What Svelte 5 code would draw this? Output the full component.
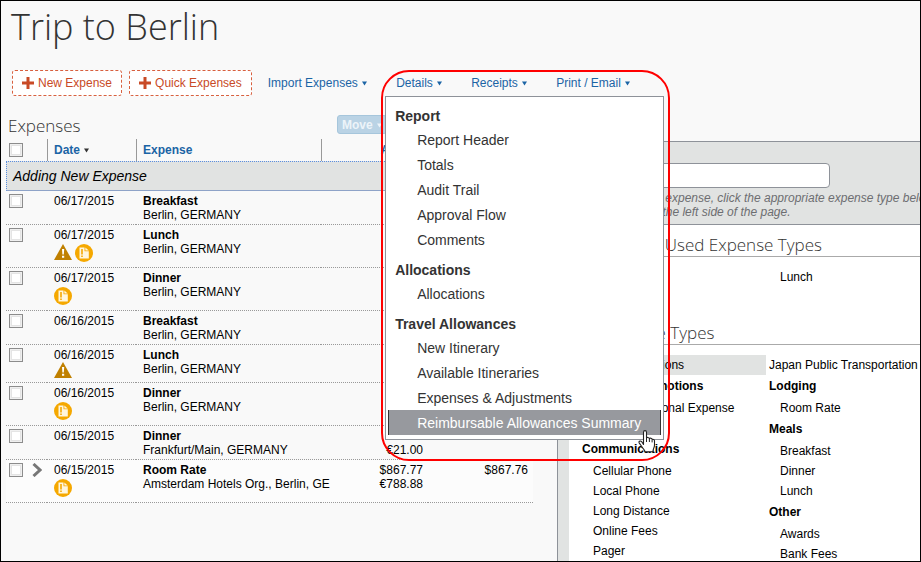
<script>
  const rows = [
    { date: '06/17/2015', name: 'Breakfast', place: 'Berlin, GERMANY', icons: [] },
    { date: '06/17/2015', name: 'Lunch', place: 'Berlin, GERMANY', icons: ['warn', 'note'] },
    { date: '06/17/2015', name: 'Dinner', place: 'Berlin, GERMANY', icons: ['note'] },
    { date: '06/16/2015', name: 'Breakfast', place: 'Berlin, GERMANY', icons: [] },
    { date: '06/16/2015', name: 'Lunch', place: 'Berlin, GERMANY', icons: ['warn'] },
    { date: '06/16/2015', name: 'Dinner', place: 'Berlin, GERMANY', icons: ['note'] },
    { date: '06/15/2015', name: 'Dinner', place: 'Frankfurt/Main, GERMANY', amount: ['', '€21.00'], icons: [] },
    { date: '06/15/2015', name: 'Room Rate', place: 'Amsterdam Hotels Org., Berlin, GE', amount: ['$867.77', '€788.88'], req: '$867.76', icons: ['note'], expandable: true }
  ];

  const menu = [
    { title: 'Report', items: ['Report Header', 'Totals', 'Audit Trail', 'Approval Flow', 'Comments'] },
    { title: 'Allocations', items: ['Allocations'] },
    { title: 'Travel Allowances', items: ['New Itinerary', 'Available Itineraries', 'Expenses & Adjustments', 'Reimbursable Allowances Summary'] }
  ];
  const active = 'Reimbursable Allowances Summary';

  const types = [
    [
      { label: 'Cash Contributions', top: true, selected: true },
      { label: 'Events & Promotions', head: true },
      { label: 'New Promotional Expense' },
      { label: '' },
      { label: 'Communications', head: true },
      { label: 'Cellular Phone' },
      { label: 'Local Phone' },
      { label: 'Long Distance' },
      { label: 'Online Fees' },
      { label: 'Pager' }
    ],
    [
      { label: 'Japan Public Transportation', top: true },
      { label: 'Lodging', head: true },
      { label: 'Room Rate' },
      { label: 'Meals', head: true },
      { label: 'Breakfast' },
      { label: 'Dinner' },
      { label: 'Lunch' },
      { label: 'Other', head: true },
      { label: 'Awards' },
      { label: 'Bank Fees' }
    ]
  ];
</script>

{#snippet plus()}
  <svg class="plus" viewBox="0 0 12 12" aria-hidden="true"><path d="M4.500 0h3v4.500H12v3H7.500V12h-3V7.500H0v-3h4.500z" fill="#c84a26" /></svg>
{/snippet}

{#snippet caret()}
  <svg class="caret" viewBox="0 0 6 5" aria-hidden="true"><path d="M0 0h6L3 5z" fill="currentColor" /></svg>
{/snippet}

<div class="page">
  <h1>Trip to Berlin</h1>

  <nav class="toolbar">
    <button class="add" type="button">{@render plus()}New Expense</button>
    <button class="add" type="button">{@render plus()}Quick Expenses</button>
    <button class="link import" type="button">Import Expenses {@render caret()}</button>
    <div class="details">
      <button class="link" type="button" aria-expanded="true">Details {@render caret()}</button>
      <div class="menu">
        {#each menu as group}
          <section>
            <h3>{group.title}</h3>
            {#each group.items as item}
              <button type="button" class:active={item === active}>{item}</button>
            {/each}
          </section>
        {/each}
      </div>
      <div class="callout"></div>
      <svg class="pointer" viewBox="0 0 18 24" aria-hidden="true">
        <path
          d="M5.500 14.500V2.500C5.500 1.200 6.200.6 7 .6s1.500.6 1.500 1.900V8c.3-.8 2.500-.9 2.900.6.7-.8 2.500-.6 2.700.9.9-.6 2.400-.1 2.400 1.300v4.200c0 2.500-1.500 4-1.500 6v.8H6.800V21c-.8-1.600-3-4-4.300-6.200-.8-1.200-1.800-2-1.500-3 .4-1.100 1.900-1 2.800 0z"
          fill="#fff" stroke="#222" stroke-width="1.100" stroke-linejoin="round" />
        <path d="M8.500 8v4M11.400 8.800v3.200M14.100 9.800v2.600" stroke="#222" fill="none" />
      </svg>
    </div>
    <button class="link" type="button">Receipts {@render caret()}</button>
    <button class="link" type="button">Print / Email {@render caret()}</button>
  </nav>

  <main>
    <div class="left">
      <div class="listbar">
        <h2>Expenses</h2>
        <button class="move" type="button" disabled>Move {@render caret()}</button>
      </div>
      <table>
        <colgroup><col class="c1" /><col class="c2" /><col class="c3" /><col class="c4" /><col class="c5" /></colgroup>
        <thead>
          <tr>
            <th><input type="checkbox" aria-label="Select all expenses" /></th>
            <th class="rule">Date<span class="dark">{@render caret()}</span></th>
            <th class="rule">Expense</th>
            <th class="rule num">Amount</th>
            <th></th>
          </tr>
        </thead>
        <tbody>
          <tr class="adding"><td colspan="5">Adding New Expense</td></tr>
          {#each rows as r, i}
            <tr class:current={r.expandable}>
              <td>
                <div class="pick">
                  <input type="checkbox" aria-label="Select expense {i + 1}" />
                  {#if r.expandable}
                    <svg class="chev" viewBox="0 0 10 14" aria-hidden="true"><path d="M1.500 1l6.500 6-6.500 6" fill="none" stroke="#777" stroke-width="3" /></svg>
                  {/if}
                </div>
              </td>
              <td>
                {r.date}
                {#if r.icons.length}
                  <div class="icons" class:low={!r.icons.includes('note')}>
                    {#each r.icons as icon}
                      {#if icon === 'warn'}
                        <svg class="warn" viewBox="0 0 18 16"><path d="M9 0l9 16H0z" fill="#c08000" /><path d="M8 5h2.200l-.4 5.500H8.400zM8 11.800h2.200v2H8z" fill="#fff" /></svg>
                      {:else}
                        <svg class="note" viewBox="0 0 18 18">
                          <circle cx="9" cy="9" r="9" fill="#f5a800" />
                          <path d="M4.500 3.500H9.500V7.300H13.800V14.500H4.500z" fill="#fff6de" />
                          <path d="M10.400 3.500l3.400 3h-3.400z" fill="#fff6de" />
                          <path d="M6.200 5h1.600v5.500H6.200zM6.200 11.500h1.600V13H6.200z" fill="#f5a800" />
                        </svg>
                      {/if}
                    {/each}
                  </div>
                {/if}
              </td>
              <td class="where"><strong>{r.name}</strong><br />{r.place}</td>
              <td class="num">
                {#if r.amount}{r.amount[0]}<br />{r.amount[1]}{/if}
              </td>
              <td class="num">{r.req ?? ''}</td>
            </tr>
          {/each}
        </tbody>
      </table>
    </div>

    <aside>
      <div class="finder">
        <input type="text" aria-label="Expense type" />
        <p>To create a new expense, click the appropriate expense type below<br />or expenses on the left side of the page.</p>
      </div>
      <div class="types">
        <h2>Frequently Used Expense Types</h2>
        <div class="cols recent">
          <div></div>
          <div><a href="#lunch">Lunch</a></div>
        </div>
        <h2>All Expense Types</h2>
        <div class="cols">
          {#each types as col}
            <div>
              {#each col as t}
                {#if t.head}
                  <h4>{t.label}</h4>
                {:else if t.label}
                  <a href="#type" class:top={t.top} class:selected={t.selected}>{t.label}</a>
                {:else}
                  <div class="blank"></div>
                {/if}
              {/each}
            </div>
          {/each}
        </div>
      </div>
    </aside>
  </main>
</div>

<style>
  :global(body) {
    margin: 0;
  }
  .page {
    box-sizing: border-box;
    height: 100vh;
    overflow: hidden;
    display: flex;
    flex-direction: column;
    border: 1px solid #000;
    background: #f9f9f9;
    color: #000;
    font: 12px/14px 'Liberation Sans', Arial, sans-serif;
  }
  h1,
  h2,
  h3,
  h4,
  p {
    margin: 0;
  }
  button {
    font: inherit;
    cursor: pointer;
  }
  h1 {
    padding: 0 10px;
    font: 300 36px/52px 'Open Sans', sans-serif;
    color: #333;
  }
  h2 {
    font: 300 17px/22px 'Open Sans', sans-serif;
    color: #333;
    white-space: nowrap;
  }
  .toolbar {
    display: flex;
    align-items: center;
    padding: 17px 11px 0;
    white-space: nowrap;
  }
  .add {
    height: 26px;
    margin-right: 7px;
    padding: 0 9px;
    display: flex;
    align-items: center;
    gap: 4px;
    border: 1px dashed #d8603f;
    border-radius: 3px;
    background: #fff;
    color: #c84a26;
  }
  .plus {
    width: 12px;
    height: 12px;
  }
  .caret {
    width: 5px;
    height: 5px;
    margin-left: 1px;
    vertical-align: 1px;
  }
  .link {
    padding: 0;
    margin-right: 29px;
    border: 0;
    background: none;
    color: #1b64a5;
  }
  .import {
    margin-left: 9px;
  }
  .details {
    position: relative;
  }
  .menu {
    position: absolute;
    z-index: 2;
    top: 20px;
    left: -11px;
    box-sizing: border-box;
    width: 279px;
    padding: 9px 2px 4px;
    border: 1px solid #8e9299;
    background: #fff;
    color: #333;
    font-size: 14px;
  }
  .menu section {
    margin-bottom: 8px;
  }
  .menu section:last-child {
    margin-bottom: 0;
  }
  .menu h3 {
    padding-left: 7px;
    font-size: 14px;
    line-height: 21px;
  }
  .menu button {
    display: block;
    width: 100%;
    height: 25px;
    padding: 0 0 0 29px;
    border: 0;
    background: none;
    color: #333;
    text-align: left;
  }
  .menu button.active {
    background: #97999e;
    color: #fff;
    box-shadow: inset 1px 0 #333, inset -1px 0 #333;
  }
  .callout {
    position: absolute;
    z-index: 3;
    top: -6px;
    left: -15px;
    box-sizing: border-box;
    width: 289px;
    height: 391px;
    border: 2px solid #f00;
    border-radius: 28px;
    pointer-events: none;
  }
  .pointer {
    position: absolute;
    z-index: 4;
    top: 354px;
    left: 242px;
    width: 18px;
    height: 24px;
  }
  main {
    flex: 1;
    min-height: 0;
    display: grid;
    grid-template-columns: minmax(0, 556fr) minmax(0, 363fr);
  }
  .left {
    padding: 19px 24px 0 5px;
  }
  .listbar {
    display: flex;
    justify-content: space-between;
    height: 24px;
    padding: 0 146px 0 2px;
  }
  .move {
    height: 19px;
    padding: 0 4px;
    border: 1px solid #a6c6dc;
    border-radius: 3px;
    background: #bad3e5;
    color: #edf4f9;
    font-weight: bold;
  }
  table {
    width: 100%;
    table-layout: fixed;
    border-collapse: separate;
    border-spacing: 0;
  }
  .c1 {
    width: 41px;
  }
  .c2 {
    width: 89px;
  }
  .c3 {
    width: 185px;
  }
  .c5 {
    width: 105px;
  }
  th {
    height: 22px;
    padding: 0 6px;
    text-align: left;
    color: #1b64a5;
  }
  th.rule {
    border-left: 1px solid #999;
  }
  td {
    padding: 3px 5px 2px 7px;
    vertical-align: top;
    border-bottom: 1px dotted #999;
  }
  th:first-child,
  td:first-child {
    padding-left: 3px;
  }
  th.num {
    padding-right: 2px;
  }
  tbody tr {
    height: 34px;
  }
  .num {
    text-align: right;
  }
  .dark {
    margin-left: 3px;
    color: #333;
  }
  tr.adding {
    height: 30px;
  }
  tr.adding td {
    padding: 0 6px;
    vertical-align: middle;
    border: 1px dotted #5b8fe0;
    border-bottom: 1px solid #8ea3c8;
    background: #e1e3e2;
    font-size: 14px;
    font-style: italic;
  }
  .current td {
    background: #fcfcfc;
  }
  td.where {
    padding-right: 0;
    white-space: nowrap;
  }
  input[type='checkbox'] {
    appearance: none;
    display: block;
    box-sizing: border-box;
    width: 14px;
    height: 14px;
    margin: 0;
    border: 1px solid #8c8c8c;
    background: #fff;
    box-shadow: inset 0 0 0 1px #f0f0f0, inset 0 0 0 2px #e4e4e4;
  }
  .pick {
    display: flex;
    gap: 9px;
  }
  .chev {
    width: 10px;
    height: 14px;
  }
  .icons {
    display: flex;
    gap: 3px;
    height: 23px;
    padding-top: 2px;
    box-sizing: border-box;
  }
  .icons.low {
    height: 18px;
    padding-top: 0;
  }
  .warn {
    width: 18px;
    height: 16px;
  }
  .note {
    width: 18px;
    height: 18px;
  }
  aside {
    margin-top: 45px;
    display: flex;
    flex-direction: column;
    min-height: 0;
    overflow: hidden;
    border-top: 1px solid #8e9299;
    border-left: 1px solid #8e9299;
    background: #fff;
  }
  .finder {
    height: 83px;
    padding: 21px 0 0 19px;
    box-sizing: border-box;
    flex: none;
    background: #e1e3e2;
    border-bottom: 1px solid #8e9299;
    color: #6d6e71;
    font-style: italic;
  }
  .finder input {
    display: block;
    box-sizing: border-box;
    width: 253px;
    height: 25px;
    margin-bottom: 3px;
    border: 1px solid #8e9299;
    border-radius: 4px;
    background: #fff;
  }
  .finder p {
    white-space: nowrap;
  }
  .types {
    flex: 1;
    padding-top: 9px;
    border-left: 11px solid #e1e3e2;
  }
  .types h2 {
    padding-left: 10px;
    border-bottom: 1px solid #aaa;
  }
  .cols {
    display: grid;
    grid-template-columns: 197px minmax(0, 1fr);
    padding-top: 10px;
  }
  .recent {
    height: 55px;
  }
  .cols a {
    display: block;
    padding-left: 24px;
    line-height: 20px;
    color: #000;
    text-decoration: none;
    white-space: nowrap;
  }
  .blank {
    height: 20px;
  }
  .cols > div + div a {
    padding-left: 14px;
  }
  .cols a.top {
    padding-left: 13px;
  }
  .cols > div + div a.top,
  .cols > div + div h4 {
    padding-left: 3px;
  }
  .cols a.selected {
    background: #e1e3e2;
  }
  .cols h4 {
    padding-left: 13px;
    line-height: 23px;
  }
</style>
